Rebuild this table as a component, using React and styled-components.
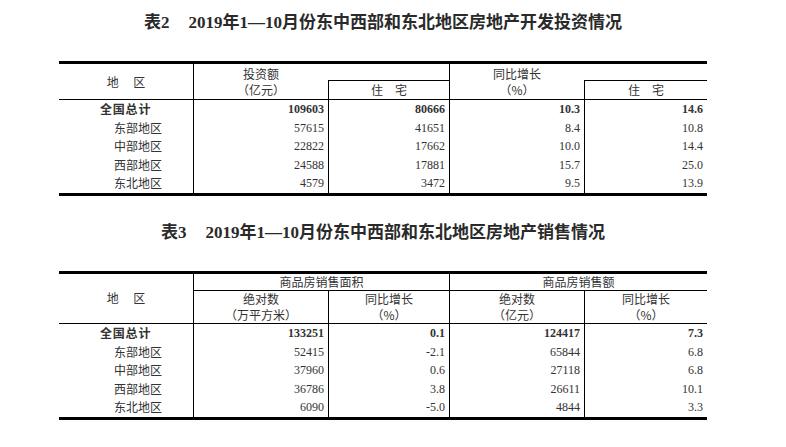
import React from 'react';
import styled, { createGlobalStyle } from 'styled-components';

const GlobalStyle = createGlobalStyle`
  body {
    margin: 0;
    background: #fff;
  }
`;

const investRows = [
  { name: '全国总计', total: true, values: ['109603', '80666', '10.3', '14.6'] },
  { name: '东部地区', values: ['57615', '41651', '8.4', '10.8'] },
  { name: '中部地区', values: ['22822', '17662', '10.0', '14.4'] },
  { name: '西部地区', values: ['24588', '17881', '15.7', '25.0'] },
  { name: '东北地区', values: ['4579', '3472', '9.5', '13.9'] },
];

const salesRows = [
  { name: '全国总计', total: true, values: ['133251', '0.1', '124417', '7.3'] },
  { name: '东部地区', values: ['52415', '-2.1', '65844', '6.8'] },
  { name: '中部地区', values: ['37960', '0.6', '27118', '6.8'] },
  { name: '西部地区', values: ['36786', '3.8', '26611', '10.1'] },
  { name: '东北地区', values: ['6090', '-5.0', '4844', '3.3'] },
];

const Page = styled.div`
  padding: 13px 0 0 59px;
  width: 648px;
`;

const Section = styled.section`
  margin-bottom: 27px;
`;

const Title = styled.h2`
  margin: 0 0 28px;
  height: 20px;
  line-height: 20px;
  text-align: center;
  font-family: "Liberation Serif", "Noto Sans CJK SC", serif;
  font-size: 17px;
  font-weight: bold;
  color: #2a2a2a;
  white-space: nowrap;
`;

const Gap = styled.span`
  display: inline-block;
  width: 19px;
`;

const Grid = styled.div`
  display: grid;
  grid-template-columns: 134px 135px 121px 135px 123px;
  grid-template-rows: 17px ${(p) => p.$head}px repeat(5, 18.6px);
  border-top: 3px solid #000;
  border-bottom: 3px solid #000;
`;

const HeadCell = styled.div`
  box-sizing: border-box;
  grid-row: span ${(p) => p.$rows || 1};
  grid-column: span ${(p) => p.$cols || 1};
  display: flex;
  flex-direction: column;
  align-items: center;
  justify-content: center;
  border-left: ${(p) => (p.$left ? '1px solid #000' : 'none')};
  border-bottom: ${(p) => (p.$bottom ? '1px solid #000' : 'none')};
  font-family: "Noto Sans CJK SC", sans-serif;
  font-size: 12px;
  line-height: 16px;
  color: #333;
  white-space: pre;
`;

const LabelCell = styled.div`
  padding-left: ${(p) => (p.$total ? 41 : 55)}px;
  font-family: "Noto Sans CJK SC", sans-serif;
  font-size: 12px;
  font-weight: ${(p) => (p.$total ? 'bold' : 'normal')};
  letter-spacing: ${(p) => (p.$total ? '0.8px' : '0')};
  line-height: 18.6px;
  color: #333;
  white-space: nowrap;
`;

const NumCell = styled.div`
  box-sizing: border-box;
  border-left: 1px solid #000;
  padding-right: 4px;
  text-align: right;
  font-family: "Liberation Serif", serif;
  font-size: 12px;
  font-weight: ${(p) => (p.$total ? 'bold' : 'normal')};
  line-height: 18.6px;
  color: #333;
`;

const Body = ({ rows }) =>
  rows.map((row) => (
    <React.Fragment key={row.name}>
      <LabelCell $total={row.total}>{row.name}</LabelCell>
      {row.values.map((v, i) => (
        <NumCell key={i} $total={row.total}>
          {v}
        </NumCell>
      ))}
    </React.Fragment>
  ));

const Two = ({ top, bottom }) => (
  <>
    <span>{top}</span>
    <span>{bottom}</span>
  </>
);

export default function App() {
  return (
    <Page>
      <GlobalStyle />
      <Section>
        <Title>
          表2<Gap />2019年1—10月份东中西部和东北地区房地产开发投资情况
        </Title>
        <Grid $head={19}>
          <HeadCell $rows={2} $bottom>地　 区</HeadCell>
          <HeadCell $rows={2} $left $bottom>
            <Two top="投资额" bottom="（亿元）" />
          </HeadCell>
          <HeadCell $bottom />
          <HeadCell $rows={2} $left $bottom>
            <Two top="同比增长" bottom="（%）" />
          </HeadCell>
          <HeadCell $bottom />
          <HeadCell $left $bottom>住　宅</HeadCell>
          <HeadCell $left $bottom>住　宅</HeadCell>
          <Body rows={investRows} />
        </Grid>
      </Section>
      <Section>
        <Title>
          表3<Gap />2019年1—10月份东中西部和东北地区房地产销售情况
        </Title>
        <Grid $head={33}>
          <HeadCell $rows={2} $bottom>地　 区</HeadCell>
          <HeadCell $cols={2} $left $bottom>商品房销售面积</HeadCell>
          <HeadCell $cols={2} $left $bottom>商品房销售额</HeadCell>
          <HeadCell $left $bottom>
            <Two top="绝对数" bottom="（万平方米）" />
          </HeadCell>
          <HeadCell $left $bottom>
            <Two top="同比增长" bottom="（%）" />
          </HeadCell>
          <HeadCell $left $bottom>
            <Two top="绝对数" bottom="（亿元）" />
          </HeadCell>
          <HeadCell $left $bottom>
            <Two top="同比增长" bottom="（%）" />
          </HeadCell>
          <Body rows={salesRows} />
        </Grid>
      </Section>
    </Page>
  );
}
